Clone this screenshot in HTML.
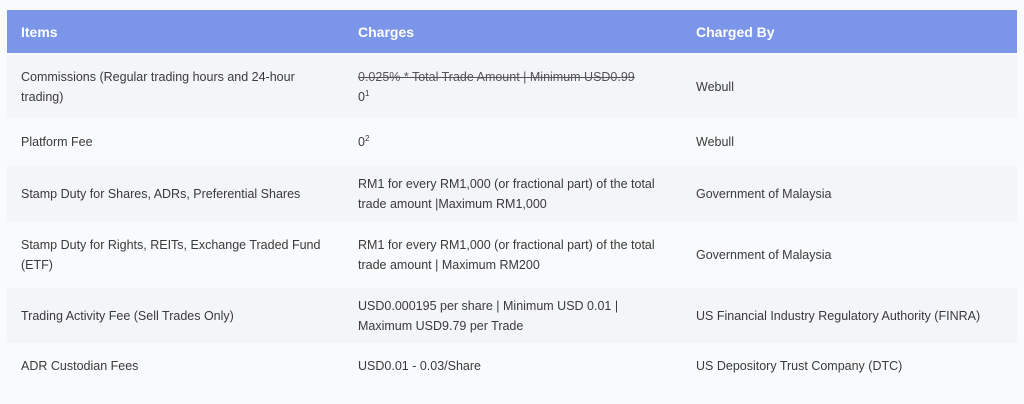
<!DOCTYPE html>
<html><head><meta charset="utf-8"><style>
body{margin:0;width:1024px;height:404px;background:#f9fafc;font-family:"Liberation Sans",sans-serif;font-size:12.5px;color:#3a3a3a;position:relative;overflow:hidden}
.r{position:absolute;left:7px;width:1010px;background:#f4f5f9}
.r.alt{background:#f9fafc}
.c{position:absolute;top:50%;transform:translateY(-50%);line-height:20px}
.c1{left:14px;width:300px}.c2{left:351px;width:308px}.c3{left:689px;width:310px}
.h{top:10px;height:43px;background:#7b95e8;color:#fff;font-weight:bold;font-size:14px}
sup{font-size:8px;vertical-align:top;position:relative;top:-3px}
s{color:#555}
</style></head><body>
<div class="r h"><div class="c c1">Items</div><div class="c c2">Charges</div><div class="c c3">Charged By</div></div>
<div class="r" style="top:55px;height:63px"><div class="c c1">Commissions (Regular trading hours and 24-hour trading)</div><div class="c c2" style="width:330px"><s>0.025% * Total Trade Amount | Minimum USD0.99</s><br>0<sup>1</sup></div><div class="c c3">Webull</div></div>
<div class="r alt" style="top:120px;height:44px"><div class="c c1">Platform Fee</div><div class="c c2">0<sup>2</sup></div><div class="c c3">Webull</div></div>
<div class="r" style="top:166px;height:56px"><div class="c c1">Stamp Duty for Shares, ADRs, Preferential Shares</div><div class="c c2">RM1 for every RM1,000 (or fractional part) of the total trade amount |Maximum RM1,000</div><div class="c c3">Government of Malaysia</div></div>
<div class="r alt" style="top:224px;height:62px"><div class="c c1">Stamp Duty for Rights, REITs, Exchange Traded Fund (ETF)</div><div class="c c2">RM1 for every RM1,000 (or fractional part) of the total trade amount | Maximum RM200</div><div class="c c3">Government of Malaysia</div></div>
<div class="r" style="top:288px;height:55px"><div class="c c1">Trading Activity Fee (Sell Trades Only)</div><div class="c c2">USD0.000195 per share | Minimum USD 0.01 | Maximum USD9.79 per Trade</div><div class="c c3">US Financial Industry Regulatory Authority (FINRA)</div></div>
<div class="r alt" style="top:345px;height:42px"><div class="c c1">ADR Custodian Fees</div><div class="c c2">USD0.01 - 0.03/Share</div><div class="c c3">US Depository Trust Company (DTC)</div></div>
</body></html>
